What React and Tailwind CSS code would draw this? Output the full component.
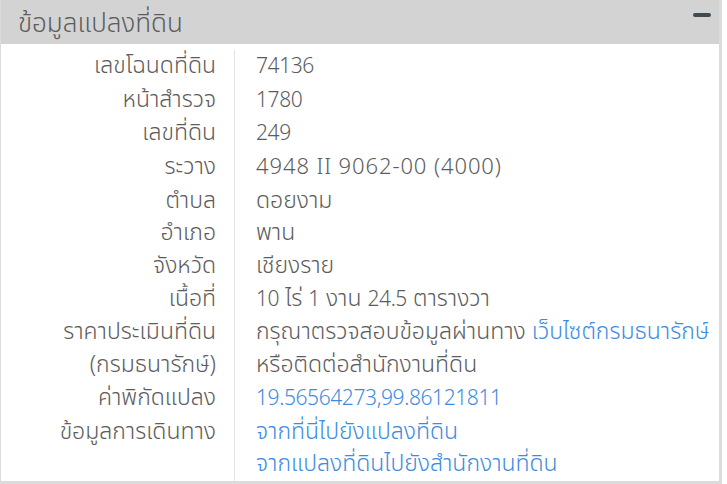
import React from "react";

// latin digits sit a bit smaller and tighter next to the thai text
const Num = ({ children }) => (
  <span className="text-[21px] tracking-[-0.4px]">{children}</span>
);

const Link = ({ children }) => (
  <a href="#" className="text-[#3d8be0]">
    {children}
  </a>
);

const rows = [
  { label: "เลขโฉนดที่ดิน", value: <Num>74136</Num> },
  { label: "หน้าสำรวจ", value: <Num>1780</Num> },
  { label: "เลขที่ดิน", value: <Num>249</Num> },
  {
    label: "ระวาง",
    value: <span className="text-[22px] tracking-[0.9px]">4948 II 9062-00 (4000)</span>,
  },
  { label: "ตำบล", value: "ดอยงาม" },
  { label: "อำเภอ", value: "พาน" },
  { label: "จังหวัด", value: "เชียงราย" },
  {
    label: "เนื้อที่",
    value: (
      <>
        <Num>10</Num> ไร่ <Num>1</Num> งาน <Num>24.5</Num> ตารางวา
      </>
    ),
  },
  {
    label: "ราคาประเมินที่ดิน",
    value: (
      <>
        กรุณาตรวจสอบข้อมูลผ่านทาง <Link>เว็บไซต์กรมธนารักษ์</Link>
      </>
    ),
  },
  { label: "(กรมธนารักษ์)", value: "หรือติดต่อสำนักงานที่ดิน" },
  {
    label: "ค่าพิกัดแปลง",
    value: (
      <Link>
        <Num>19.56564273,99.86121811</Num>
      </Link>
    ),
  },
  { label: "ข้อมูลการเดินทาง", value: <Link>จากที่นี่ไปยังแปลงที่ดิน</Link> },
  { label: "", value: <Link>จากแปลงที่ดินไปยังสำนักงานที่ดิน</Link> },
];

export default function App() {
  return (
    <div className="w-[727px] h-[484px] bg-white pr-[5px] font-['Noto_Sans_Thai','Noto_Sans',sans-serif] font-light text-[#5c5c5c]">
      <div className="h-[484px] border-r-[3px] border-b-[3px] border-l border-[#dcdcdc] flex flex-col">
        {/* panel heading */}
        <div className="h-[48px] bg-[#d3d3d3] flex items-center justify-between pl-[17px] pr-[8px]">
          <span className="text-[26px] leading-none pt-[4px]">ข้อมูลแปลงที่ดิน</span>
          <span className="block w-[18px] h-[4px] rounded-full bg-[#3f4b52] mb-[14px]" />
        </div>

        {/* parcel details */}
        <div className="pt-[6px] grid grid-cols-[233px_1fr] text-[23px] leading-[32.7px]">
          {rows.map((r, i) => (
            <React.Fragment key={i}>
              <div className="text-right pr-[18px] whitespace-nowrap">{r.label}</div>
              <div className="border-l border-[#e3e3e3] pl-[21px] whitespace-nowrap">{r.value}</div>
            </React.Fragment>
          ))}
        </div>
      </div>
    </div>
  );
}
